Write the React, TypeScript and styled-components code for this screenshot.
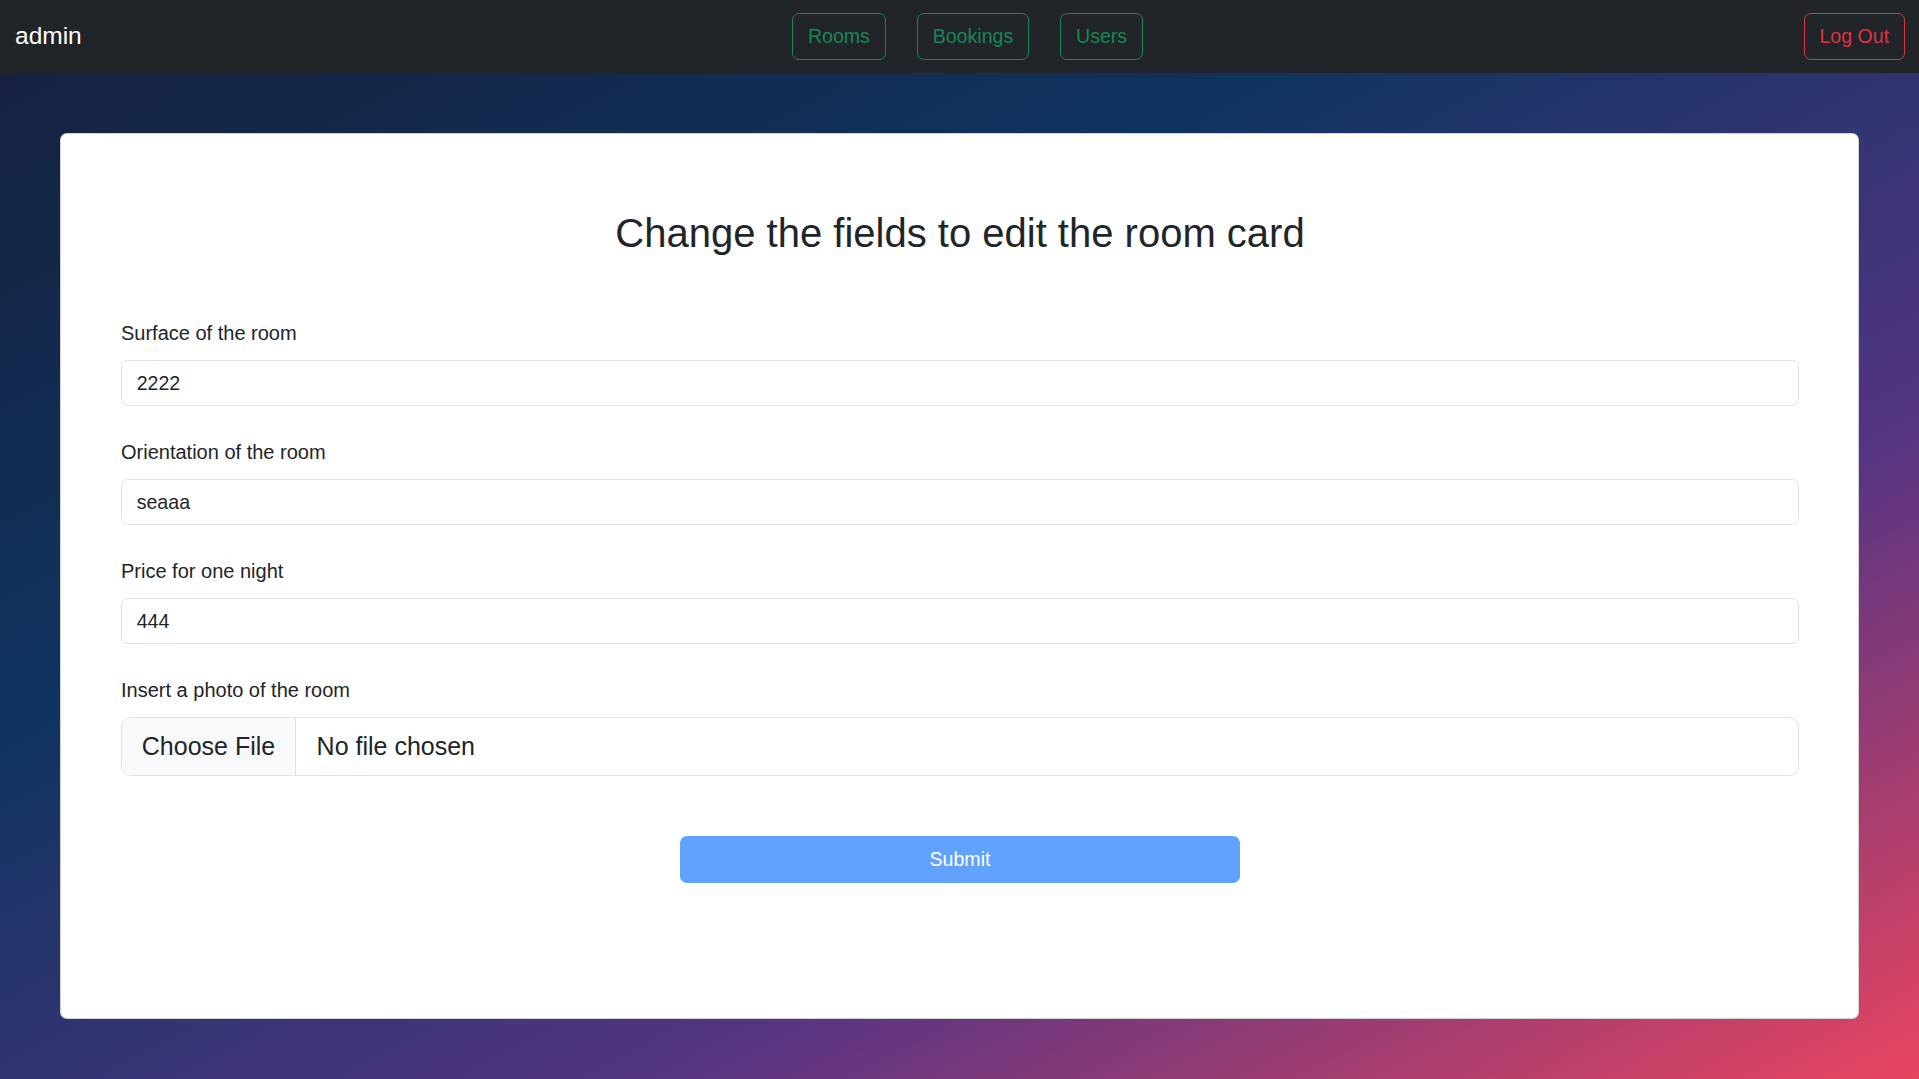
import React from "react";
import styled, { createGlobalStyle } from "styled-components";

const GlobalStyle = createGlobalStyle`
  *, *::before, *::after { box-sizing: border-box; }
  html, body { margin: 0; padding: 0; }
  body {
    font-family: "Liberation Sans", Arial, sans-serif;
    color: #212529;
    background: #212529;
  }
`;

const Page = styled.div`
  display: flex;
  flex-direction: column;
  min-height: 100vh;
`;

const Navbar = styled.nav`
  height: 73px;
  background: #212529;
  display: grid;
  grid-template-columns: 1fr auto 1fr;
  align-items: center;
  padding: 0 14px 0 15px;
`;

const Brand = styled.a`
  justify-self: start;
  color: #ffffff;
  font-size: 24.5px;
  line-height: 36.7px;
  text-decoration: none;
`;

const NavGroup = styled.div`
  display: flex;
  gap: 31px;
  margin-left: 15px;
`;

const OutlineButton = styled.button<{ $tone: "green" | "red" }>`
  justify-self: ${(p) => (p.$tone === "red" ? "end" : "auto")};
  font-family: inherit;
  font-size: 19.58px;
  line-height: 29.4px;
  padding: 7.4px 14.9px;
  background: transparent;
  color: ${(p) => (p.$tone === "red" ? "#dc3545" : "#198754")};
  border: 1px solid ${(p) => (p.$tone === "red" ? "#dc3545" : "#198754")};
  border-radius: 7px;
  cursor: pointer;
`;

const Main = styled.main`
  flex: 1;
  display: flex;
  flex-direction: column;
  padding: 60px;
  background: linear-gradient(to bottom right, #16213e 0%, #0f3460 33%, #533483 67%, #e94560 100%);
`;

const Card = styled.section`
  flex: 1;
  display: flex;
  flex-direction: column;
  background: #ffffff;
  border: 1px solid rgba(0, 0, 0, 0.175);
  border-radius: 7px;
  padding: 75px 59px 0 60px;
`;

const Title = styled.h2`
  margin: 0 0 61.5px;
  font-size: 40px;
  line-height: 48px;
  font-weight: 500;
  text-align: center;
  color: #212529;
`;

const Form = styled.form`
  display: flex;
  flex-direction: column;
`;

const Fields = styled.div`
  display: flex;
  flex-direction: column;
  gap: 31.3px;
`;

const Field = styled.div`
  display: flex;
  flex-direction: column;
`;

const Label = styled.label`
  display: block;
  font-size: 20px;
  line-height: 29.4px;
  margin-bottom: 12.3px;
  color: #212529;
`;

const TextInput = styled.input`
  display: block;
  width: 100%;
  height: 46px;
  padding: 7.3px 14.7px;
  font-family: inherit;
  font-size: 19.58px;
  line-height: 29.4px;
  color: #212529;
  background: #ffffff;
  border: 1px solid #dee2e6;
  border-radius: 7px;
  outline: none;
`;

const FileField = styled.label`
  display: flex;
  align-items: stretch;
  height: 58.6px;
  border: 1px solid #dee2e6;
  border-radius: 9.8px;
  overflow: hidden;
  font-size: 25px;
  line-height: 36.7px;
  color: #212529;
  cursor: pointer;
`;

const FileButton = styled.span`
  display: flex;
  align-items: center;
  padding: 0 19.8px;
  background: #f8f9fa;
  border-right: 1px solid #dee2e6;
`;

const FileName = styled.span`
  display: flex;
  align-items: center;
  padding-left: 20.6px;
`;

const HiddenFile = styled.input`
  display: none;
`;

const SubmitButton = styled.button`
  align-self: center;
  width: 560px;
  height: 47px;
  margin-top: 60px;
  font-family: inherit;
  font-size: 19.58px;
  line-height: 29.4px;
  color: #ffffff;
  background: #61a2fe;
  border: none;
  border-radius: 7px;
`;

export default function App() {
  return (
    <Page>
      <GlobalStyle />
      <Navbar>
        <Brand href="#">admin</Brand>
        <NavGroup>
          <OutlineButton $tone="green">Rooms</OutlineButton>
          <OutlineButton $tone="green">Bookings</OutlineButton>
          <OutlineButton $tone="green">Users</OutlineButton>
        </NavGroup>
        <OutlineButton $tone="red">Log Out</OutlineButton>
      </Navbar>
      <Main>
        <Card>
          <Title>Change the fields to edit the room card</Title>
          <Form onSubmit={(e) => e.preventDefault()}>
            <Fields>
              <Field>
                <Label htmlFor="surface">Surface of the room</Label>
                <TextInput id="surface" defaultValue="2222" />
              </Field>
              <Field>
                <Label htmlFor="orientation">Orientation of the room</Label>
                <TextInput id="orientation" defaultValue="seaaa" />
              </Field>
              <Field>
                <Label htmlFor="price">Price for one night</Label>
                <TextInput id="price" defaultValue="444" />
              </Field>
              <Field>
                <Label htmlFor="photo">Insert a photo of the room</Label>
                <FileField>
                  <FileButton>Choose File</FileButton>
                  <FileName>No file chosen</FileName>
                  <HiddenFile id="photo" type="file" />
                </FileField>
              </Field>
            </Fields>
            <SubmitButton type="submit" disabled>
              Submit
            </SubmitButton>
          </Form>
        </Card>
      </Main>
    </Page>
  );
}
